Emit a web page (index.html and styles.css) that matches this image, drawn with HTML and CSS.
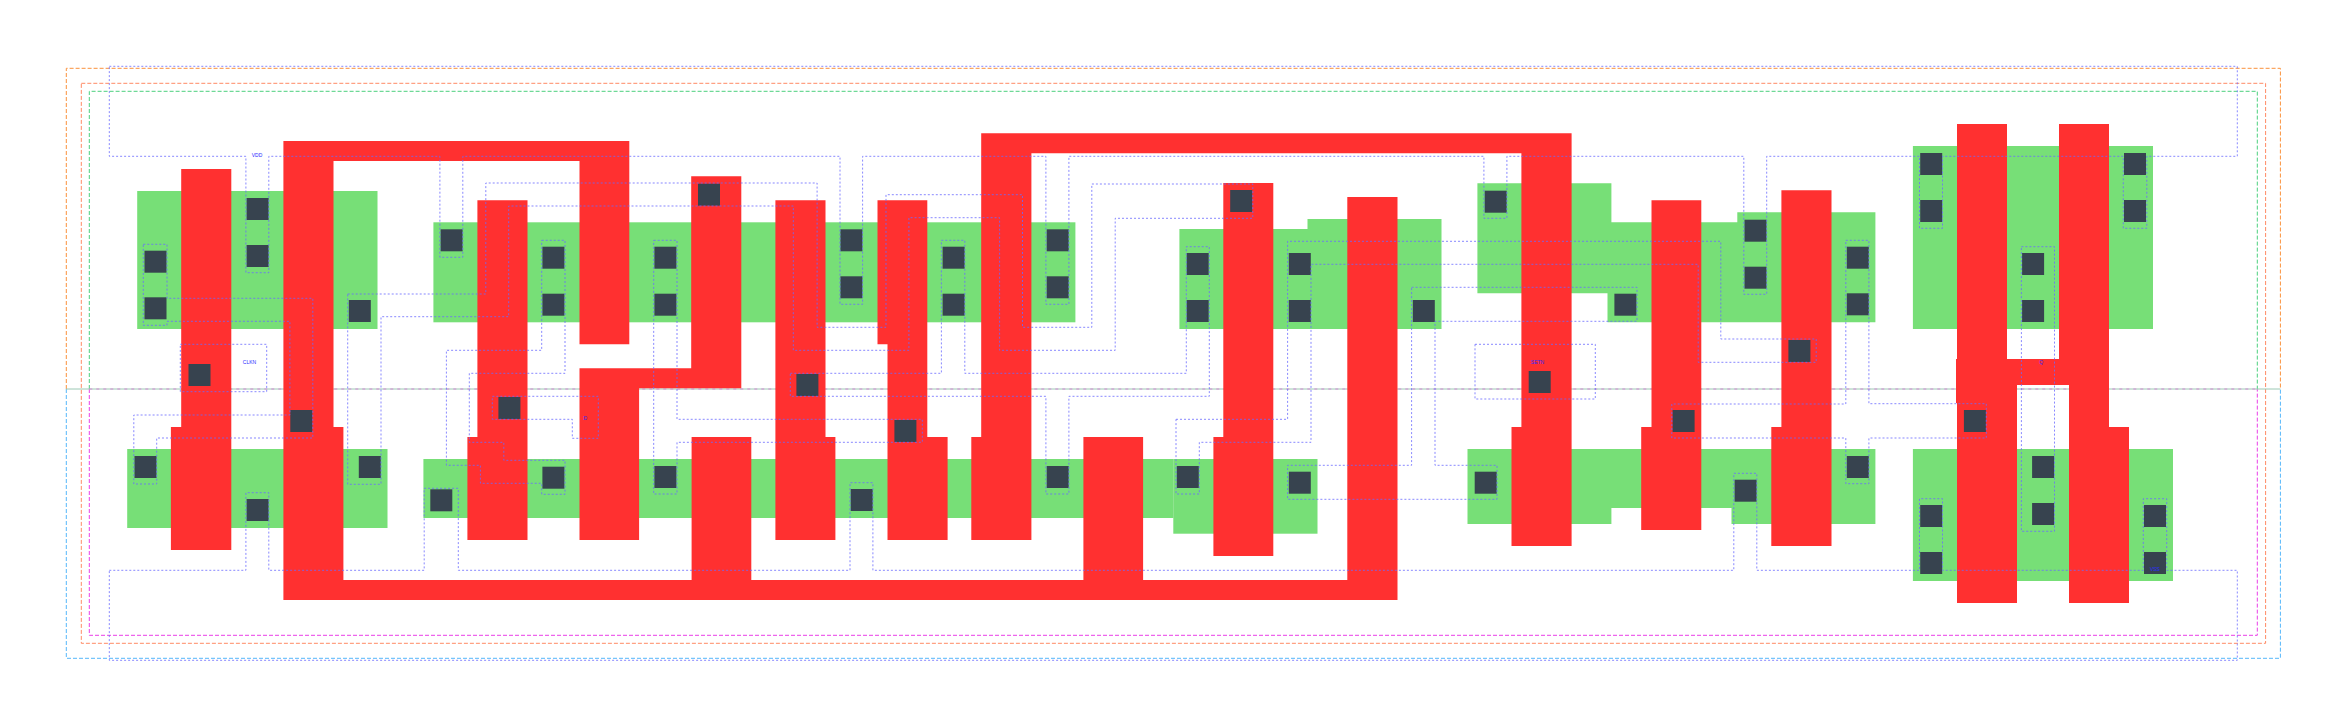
FILE: index.html
```html
<!DOCTYPE html>
<html lang="en">
<head>
<meta charset="utf-8">
<title>Cell layout</title>
<link rel="stylesheet" href="styles.css">
</head>
<body>
<svg class="layout" width="2347" height="727" viewBox="0 0 2347 727" xmlns="http://www.w3.org/2000/svg">
  <g class="bounds">
    <polyline class="b-orange" points="66.3,389 66.3,68.3 2280.4,68.3 2280.4,389"/>
    <polyline class="b-sky" points="66.3,389 66.3,658.3 2280.4,658.3 2280.4,389"/>
    <rect class="b-coral" x="81.3" y="83.3" width="2184.3" height="560"/>
    <polyline class="b-green" points="89.3,389 89.3,91.3 2257.3,91.3 2257.3,389"/>
    <polyline class="b-magenta" points="89.3,389 89.3,635.3 2257.3,635.3 2257.3,389"/>
    <line class="mid-base" x1="66.3" y1="389" x2="2280.4" y2="389"/>
    <line class="mid-pink" x1="89.3" y1="389" x2="2257.3" y2="389"/>
  </g>
  <g class="diff">
    <rect x="137.2" y="191" width="240.3" height="138"/>
    <rect x="127.2" y="449" width="260.3" height="79"/>
    <rect x="433.4" y="222.3" width="642" height="100"/>
    <rect x="423.4" y="459" width="750" height="59"/>
    <rect x="1173.3" y="459" width="144.2" height="74.7"/>
    <polygon points="1179.4,229 1307.5,229 1307.5,219 1441.5,219 1441.5,329 1179.4,329"/>
    <polygon points="1477.4,183.3 1611.4,183.3 1611.4,222.3 1737.3,222.3 1737.3,212.3 1875.4,212.3 1875.4,322.3 1607.5,322.3 1607.5,293.3 1477.4,293.3"/>
    <polygon points="1467.5,449 1875.4,449 1875.4,524 1731.5,524 1731.5,508 1611.4,508 1611.4,524 1467.5,524"/>
    <rect x="1912.9" y="146" width="240.1" height="183"/>
    <rect x="1912.9" y="449" width="260.1" height="132"/>
  </g>
  <g class="poly">
    <polygon points="181.2,169 231.3,169 231.3,550 170.9,550 170.9,427 181.2,427"/>
    <polygon points="283.4,141 629.3,141 629.3,344.3 579.5,344.3 579.5,161 333.5,161 333.5,427 343.4,427 343.4,580 691.6,580 691.6,437 751.3,437 751.3,580 1083.4,580 1083.4,437 1143.1,437 1143.1,580 1347.3,580 1347.3,197 1397.5,197 1397.5,600 283.4,600"/>
    <polygon points="477.4,200.3 527.5,200.3 527.5,540 467.4,540 467.4,437 477.4,437"/>
    <polygon points="691.2,176.3 741.3,176.3 741.3,388.3 639.1,388.3 639.1,540 579.5,540 579.5,368.3 691.2,368.3"/>
    <polygon points="775.4,200.3 825.5,200.3 825.5,437 835.4,437 835.4,540 775.4,540"/>
    <polygon points="877.5,200.3 927.3,200.3 927.3,437 947.6,437 947.6,540 887.5,540 887.5,344.3 877.5,344.3"/>
    <polygon points="981.2,133.3 1571.6,133.3 1571.6,546 1511.5,546 1511.5,427 1521.4,427 1521.4,153.3 1031.4,153.3 1031.4,540 971.3,540 971.3,437 981.2,437"/>
    <polygon points="1223.3,183 1273.3,183 1273.3,556 1213.4,556 1213.4,437 1223.3,437"/>
    <polygon points="1651.5,200.3 1701.3,200.3 1701.3,530 1641.2,530 1641.2,427 1651.5,427"/>
    <polygon points="1781.4,190.3 1831.5,190.3 1831.5,546 1771.3,546 1771.3,427 1781.4,427"/>
    <polygon points="1957,124 2007,124 2007,359 2059,359 2059,124 2109,124 2109,427 2129,427 2129,603 2069,603 2069,385 2017,385 2017,603 1957,603 1957,403 1956,403 1956,359 1957,359"/>
  </g>
  <g class="contacts">
    <rect x="144.5" y="250.7" width="22" height="22"/>
    <rect x="144.5" y="297.3" width="22" height="22"/>
    <rect x="246.6" y="198" width="22" height="22"/>
    <rect x="246.6" y="245" width="22" height="22"/>
    <rect x="348.8" y="300" width="22" height="22"/>
    <rect x="440.6" y="229.3" width="22" height="22"/>
    <rect x="542.4" y="246.7" width="22" height="22"/>
    <rect x="542.4" y="293.7" width="22" height="22"/>
    <rect x="188.5" y="364" width="22" height="22"/>
    <rect x="134.5" y="456" width="22" height="22"/>
    <rect x="246.6" y="499" width="22" height="22"/>
    <rect x="290.3" y="410" width="22" height="22"/>
    <rect x="358.8" y="456" width="22" height="22"/>
    <rect x="430.3" y="489.3" width="22" height="22"/>
    <rect x="498.4" y="397" width="22" height="22"/>
    <rect x="542.4" y="466.7" width="22" height="22"/>
    <rect x="654.4" y="246.7" width="22" height="22"/>
    <rect x="654.4" y="293.7" width="22" height="22"/>
    <rect x="698" y="183.7" width="22" height="22"/>
    <rect x="840.4" y="229.3" width="22" height="22"/>
    <rect x="840.4" y="276.3" width="22" height="22"/>
    <rect x="942.6" y="246.7" width="22" height="22"/>
    <rect x="942.6" y="293.7" width="22" height="22"/>
    <rect x="1046.7" y="229.3" width="22" height="22"/>
    <rect x="1046.7" y="276.3" width="22" height="22"/>
    <rect x="1186.7" y="253" width="22" height="22"/>
    <rect x="1186.7" y="300" width="22" height="22"/>
    <rect x="796.4" y="374" width="22" height="22"/>
    <rect x="654.4" y="466" width="22" height="22"/>
    <rect x="894.4" y="420" width="22" height="22"/>
    <rect x="850.7" y="489" width="22" height="22"/>
    <rect x="1046.7" y="466" width="22" height="22"/>
    <rect x="1176.8" y="466" width="22" height="22"/>
    <rect x="1230.2" y="190" width="22" height="22"/>
    <rect x="1288.8" y="253" width="22" height="22"/>
    <rect x="1288.8" y="300" width="22" height="22"/>
    <rect x="1412.8" y="300" width="22" height="22"/>
    <rect x="1484.7" y="190.7" width="22" height="22"/>
    <rect x="1614.4" y="293.7" width="22" height="22"/>
    <rect x="1744.5" y="219.7" width="22" height="22"/>
    <rect x="1744.5" y="266.7" width="22" height="22"/>
    <rect x="1528.7" y="371" width="22" height="22"/>
    <rect x="1788.4" y="340" width="22" height="22"/>
    <rect x="1288.8" y="471.7" width="22" height="22"/>
    <rect x="1474.7" y="471.7" width="22" height="22"/>
    <rect x="1734.6" y="479.7" width="22" height="22"/>
    <rect x="1672.6" y="410" width="22" height="22"/>
    <rect x="1846.8" y="246.7" width="22" height="22"/>
    <rect x="1846.8" y="293.3" width="22" height="22"/>
    <rect x="1846.8" y="456" width="22" height="22"/>
    <rect x="1920.2" y="153" width="22" height="22"/>
    <rect x="1920.2" y="200" width="22" height="22"/>
    <rect x="2124" y="153" width="22" height="22"/>
    <rect x="2124" y="200" width="22" height="22"/>
    <rect x="2022.1" y="253" width="22" height="22"/>
    <rect x="2022.1" y="300" width="22" height="22"/>
    <rect x="1963.9" y="410" width="22" height="22"/>
    <rect x="2032.1" y="456" width="22" height="22"/>
    <rect x="2032.1" y="503" width="22" height="22"/>
    <rect x="1920.2" y="505" width="22" height="22"/>
    <rect x="1920.2" y="552" width="22" height="22"/>
    <rect x="2144" y="505" width="22" height="22"/>
    <rect x="2144" y="552" width="22" height="22"/>
  </g>
  <g class="metal">
    <polygon points="109.3,66.3 2237.3,66.3 2237.3,156.3 2146.8,156.3 2146.8,228.3 2123.3,228.3 2123.3,156.3 1942.5,156.3 1942.5,228.3 1919.5,228.3 1919.5,156.3 1766.7,156.3 1766.7,294.3 1743.8,294.3 1743.8,156.3 1506.9,156.3 1506.9,218.3 1483.9,218.3 1483.9,156.3 1068.9,156.3 1068.9,304.3 1045.9,304.3 1045.9,156.3 862.6,156.3 862.6,304.3 840,304.3 840,156.3 462.8,156.3 462.8,257.3 439.9,257.3 439.9,156.3 268.8,156.3 268.8,272.7 245.9,272.7 245.9,156.3 109.3,156.3"/>
    <polygon points="109.3,570.3 245.9,570.3 245.9,492.7 268.8,492.7 268.8,570.3 424.2,570.3 424.2,488.3 458.3,488.3 458.3,570.3 850,570.3 850,482.7 872.9,482.7 872.9,570.3 1733.8,570.3 1733.8,473.3 1756.8,473.3 1756.8,570.3 1919.5,570.3 1919.5,498.7 1942.5,498.7 1942.5,570.3 2143.3,570.3 2143.3,498.7 2166.7,498.7 2166.7,570.3 2237.3,570.3 2237.3,660.3 109.3,660.3"/>
    <rect x="180.3" y="344.3" width="86.4" height="47.4"/>
    <polygon points="143.3,244.3 167,244.3 167,298.3 312.8,298.3 312.8,438 156.7,438 156.7,484 133.8,484 133.8,415 289.9,415 289.9,321.3 167,321.3 167,325.3 143.3,325.3"/>
    <polygon points="347.7,294 485.8,294 485.8,183 817.1,183 817.1,327.3 886,327.3 886,194.7 1022.5,194.7 1022.5,327.3 1091.8,327.3 1091.8,184 1252.8,184 1252.8,218.3 1115.2,218.3 1115.2,350.3 999.6,350.3 999.6,217.7 908.9,217.7 908.9,350.3 793.3,350.3 793.3,206 508.7,206 508.7,316.7 381,316.7 381,484.3 347.7,484.3"/>
    <polygon points="541.7,240.3 565,240.3 565,373.3 469.3,373.3 469.3,442.3 503.8,442.3 503.8,460.3 565,460.3 565,494.3 541.7,494.3 541.7,483.3 480.4,483.3 480.4,465.3 446.4,465.3 446.4,350.3 541.7,350.3"/>
    <polygon points="492.3,396.3 598.3,396.3 598.3,438.3 572.3,438.3 572.3,419.3 492.3,419.3"/>
    <polygon points="653.7,240.3 677,240.3 677,419.3 922.3,419.3 922.3,442.3 677,442.3 677,494 653.7,494"/>
    <polygon points="790.3,373.3 941.4,373.3 941.4,240.3 964.8,240.3 964.8,373.3 1186.3,373.3 1186.3,246.7 1209.3,246.7 1209.3,396.3 1068.9,396.3 1068.9,494 1045.9,494 1045.9,396.3 790.3,396.3"/>
    <polygon points="1176,419.3 1287.6,419.3 1287.6,241.3 1720.8,241.3 1720.8,339 1816.2,339 1816.2,362.3 1698.2,362.3 1698.2,264.3 1311,264.3 1311,442.3 1199.3,442.3 1199.3,494 1176,494"/>
    <polygon points="1411.6,287.3 1637,287.3 1637,321.3 1435,321.3 1435,465.3 1497,465.3 1497,499.3 1287.6,499.3 1287.6,465.3 1411.6,465.3"/>
    <rect x="1475" y="344.3" width="120.3" height="54.7"/>
    <polygon points="1845.8,240.3 1868.9,240.3 1868.9,403.7 1986.3,403.7 1986.3,438 1868.9,438 1868.9,483.7 1845.8,483.7 1845.8,438 1671.8,438 1671.8,404 1845.8,404"/>
    <rect x="2021.4" y="246.7" width="33.1" height="284.6"/>
  </g>
  <g class="labels">
    <text x="257" y="157">VDD</text>
    <text x="249.5" y="363.5">CLKN</text>
    <text x="585.3" y="419.8">D</text>
    <text x="1537.5" y="363.8">SETN</text>
    <text x="2041.3" y="363.5">Q</text>
    <text x="2154.9" y="570.8">VSS</text>
  </g>
</svg>
</body>
</html>
```
FILE: styles.css
```css
html, body {
  margin: 0;
  padding: 0;
  background: #ffffff;
}

.layout {
  display: block;
}

.bounds polyline,
.bounds rect {
  fill: none;
  stroke-width: 1;
  stroke-dasharray: 4 2;
}

.b-orange { stroke: #fb923c; }
.b-sky { stroke: #55b7fb; }
.b-coral { stroke: #ff8a65; }
.b-green { stroke: #4cd07d; }
.b-magenta { stroke: #ea3fe8; stroke-dasharray: 5 2 2 2; }

.mid-base {
  stroke: #9cc8b4;
  stroke-width: 1;
}

.mid-pink {
  stroke: #d48ad4;
  stroke-width: 1;
  stroke-dasharray: 3 4;
}

.diff rect,
.diff polygon {
  fill: #77df77;
}

.poly polygon {
  fill: #ff3030;
}

.contacts rect {
  fill: #37434f;
}

.metal polygon,
.metal rect {
  fill: none;
  stroke: #6a6aff;
  stroke-opacity: 0.8;
  stroke-width: 1;
  stroke-dasharray: 2 2;
}

.labels text {
  font-family: "Liberation Sans", Arial, sans-serif;
  font-size: 5px;
  fill: #2a2aff;
  text-anchor: middle;
}
```
